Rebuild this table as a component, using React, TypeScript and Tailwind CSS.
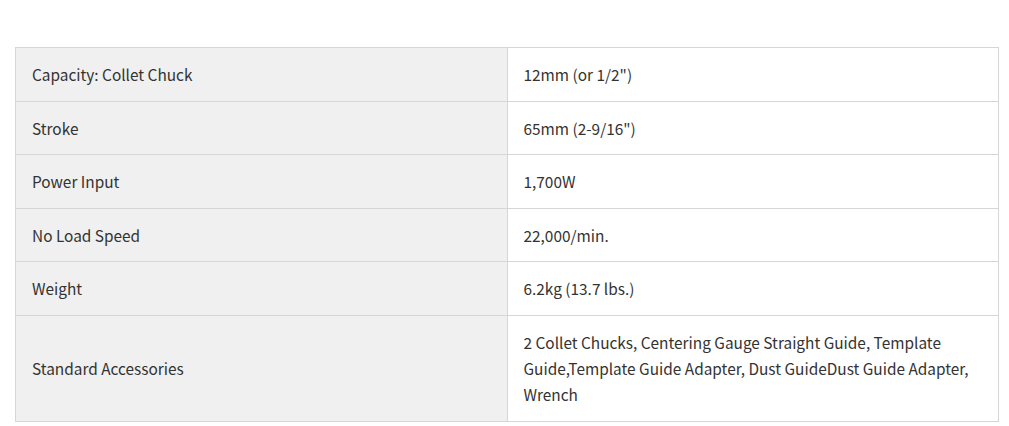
import React from 'react';

const specs: [string, string][] = [
  ['Capacity: Collet Chuck', '12mm (or 1/2")'],
  ['Stroke', '65mm (2-9/16")'],
  ['Power Input', '1,700W'],
  ['No Load Speed', '22,000/min.'],
  ['Weight', '6.2kg (13.7 lbs.)'],
  [
    'Standard Accessories',
    '2 Collet Chucks, Centering Gauge Straight Guide, Template Guide,Template Guide Adapter, Dust GuideDust Guide Adapter, Wrench',
  ],
];

export default function App() {
  return (
    <div
      className="w-[1009px] h-[426px] bg-white pt-[47px] pl-[15px] text-[15.4px] text-[#333]"
      style={{ fontFamily: '"Noto Sans CJK JP", "Source Sans Pro", sans-serif' }}
    >
      <table className="w-[984px] table-fixed border-collapse">
        <tbody>
          {specs.map(([k, v]) => (
            <tr key={k}>
              <td className="w-1/2 border border-[#d6d6d6] bg-[#f0f0f0] px-4 pt-[13px] pb-[13.6px] leading-[26px] align-middle">
                {k}
              </td>
              <td className="w-1/2 border border-[#d6d6d6] bg-white px-4 pt-[13px] pb-[13.6px] leading-[26px] align-middle">
                {v}
              </td>
            </tr>
          ))}
        </tbody>
      </table>
    </div>
  );
}
